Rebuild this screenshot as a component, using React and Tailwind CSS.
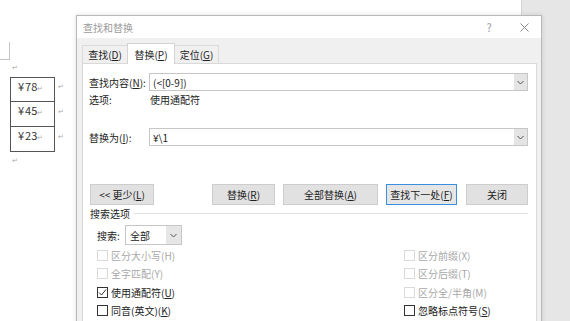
import React from 'react';

const Key = ({ children }) => <span className="underline underline-offset-[1px]">{children}</span>;

const Chevron = () => (
  <svg width="7" height="5" viewBox="0 0 7 5" fill="none">
    <path d="M0.5 1 L3.5 4 L6.5 1" stroke="#555" strokeWidth="1" />
  </svg>
);

const Combo = ({ children }) => (
  <div className="flex-1 h-[18px] flex border border-[#c6c6c6] bg-white">
    <div className="flex-1 flex items-center pl-[3px] text-[10px] text-[#222]">{children}</div>
    <div className="w-[13px] bg-[#e4e4e4] flex items-center justify-center">
      <Chevron />
    </div>
  </div>
);

const Btn = ({ children, primary, className }) => (
  <div
    className={`h-[21px] flex items-center justify-center border text-[10px] text-[#222] ${
      primary ? 'border-[#3a8ee0] bg-[#e5e5e5]' : 'border-[#cdcdcd] bg-[#e1e1e1]'
    } ${className}`}
  >
    {children}
  </div>
);

const Check = ({ label, checked, disabled }) => (
  <div className="h-[18.5px] flex items-center">
    <div
      className={`w-[11px] h-[11px] border bg-white flex items-center justify-center ${
        disabled ? 'border-[#dadada]' : 'border-[#333]'
      }`}
    >
      {checked && (
        <svg width="9" height="9" viewBox="0 0 9 9" fill="none">
          <path d="M1 4.5 L3.5 7 L8 1.5" stroke="#333" strokeWidth="1" />
        </svg>
      )}
    </div>
    <span className={`ml-[3px] text-[10px] ${disabled ? 'text-[#a8a8a8]' : 'text-[#222]'}`}>{label}</span>
  </div>
);

const prices = ['78', '45', '23'];

const App = () => {
  return (
    <div className="relative w-[570px] h-[321px] overflow-hidden bg-white flex font-['Noto_Sans_CJK_SC',sans-serif]">
      {/* document page */}
      <div className="w-[521px] h-full bg-white">
        <div className="w-[10px] h-[18px] mt-[42px] border-r border-b border-[#c4c4c4]" />
        <div className="pl-[10px]">
          <div className="h-[17px] pl-[2px] text-[7px] leading-[14px] text-[#aaa]">↵</div>
          {prices.map((v, i) => (
            <div key={v} className="flex items-start">
              <div
                className={`w-[45px] h-[25px] border-x border-b border-[#555] pl-[7px] pt-[1px] text-[11px] leading-[15px] text-[#333] ${
                  i === 0 ? 'border-t' : ''
                }`}
              >
                ¥<span className="ml-[1px]">{v}</span>
                <span className="text-[7px] text-[#aaa]">↵</span>
              </div>
              <span className="ml-[3px] mt-[4px] text-[7px] text-[#aaa]">↵</span>
            </div>
          ))}
          <div className="pl-[2px] pt-[3px] text-[7px] text-[#aaa]">↵</div>
        </div>
      </div>
      <div className="flex-1 h-full bg-[#e6e6e6] border-l border-[#d4d4d4]" />

      {/* find & replace window */}
      <div className="absolute left-[76px] top-[15px] w-[466px] h-[320px] border border-[#b8b8b8] bg-[#f0f0f0] shadow-[0_0_5px_rgba(0,0,0,0.12)] flex flex-col">
        <div className="h-[22px] bg-white flex items-center pl-[6px] text-[10px] text-[#9a9a9a]">
          <span className="flex-1">查找和替换</span>
          <span className="w-[36px] text-center text-[11px]">?</span>
          <span className="w-[34px] flex justify-center">
            <svg width="9" height="9" viewBox="0 0 9 9">
              <path d="M0.5 0.5 L8.5 8.5 M8.5 0.5 L0.5 8.5" stroke="#8a8a8a" strokeWidth="1" />
            </svg>
          </span>
        </div>

        <div className="flex-1 flex flex-col pl-[5px] pr-[4px]">
          <div className="h-[25px] flex items-end text-[10px] text-[#222]">
            <div className="w-[45px] h-[18px] flex items-center justify-center border-t border-l border-[#dadada]">
              查找(<Key>D</Key>)
            </div>
            <div className="relative z-10 -mb-px w-[48px] h-[21px] flex items-center justify-center bg-white border-t border-x border-[#d4d4d4]">
              替换(<Key>P</Key>)
            </div>
            <div className="w-[44px] h-[18px] flex items-center justify-center border-t border-r border-[#dadada]">
              定位(<Key>G</Key>)
            </div>
          </div>

          <div className="flex-1 bg-white border border-[#d9d9d9] pl-[6px] pr-[8px] pt-[9px] text-[10px] text-[#222]">
            <div className="flex items-center">
              <span className="w-[60px]">
                查找内容(<Key>N</Key>):
              </span>
              <Combo>(&lt;[0-9])</Combo>
            </div>
            <div className="h-[17px] flex items-center">
              <span className="w-[61px]">选项:</span>
              <span>使用通配符</span>
            </div>
            <div className="mt-[20px] flex items-center">
              <span className="w-[60px]">
                替换为(<Key>I</Key>):
              </span>
              <Combo>¥\1</Combo>
            </div>

            <div className="mt-[38px] flex">
              <Btn className="ml-[1px] w-[64px]">
                &lt;&lt; 更少(<Key>L</Key>)
              </Btn>
              <Btn className="ml-[58px] w-[63px]">
                替换(<Key>R</Key>)
              </Btn>
              <Btn className="ml-[8px] w-[95px]">
                全部替换(<Key>A</Key>)
              </Btn>
              <Btn primary className="ml-[8px] w-[71px]">
                查找下一处(<Key>F</Key>)
              </Btn>
              <Btn className="ml-[9px] w-[62px]">关闭</Btn>
            </div>

            <div className="h-[16px] flex items-center pl-[1px]">
              <span>搜索选项</span>
              <div className="flex-1 ml-[4px] h-px bg-[#e0e0e0]" />
            </div>

            <div className="mt-[4px] pl-[8px] flex items-center">
              <span className="w-[28px]">搜索:</span>
              <div className="w-[57px] h-[20px] flex border border-[#c6c6c6] bg-white">
                <span className="flex-1 flex items-center pl-[4px]">全部</span>
                <div className="w-[15px] bg-[#e6e6e6] flex items-center justify-center">
                  <Chevron />
                </div>
              </div>
            </div>

            <div className="mt-[1px] pl-[8px] grid grid-cols-[307px_1fr]">
              <Check label="区分大小写(H)" disabled />
              <Check label="区分前缀(X)" disabled />
              <Check label="全字匹配(Y)" disabled />
              <Check label="区分后缀(T)" disabled />
              <Check
                label={
                  <>
                    使用通配符(<Key>U</Key>)
                  </>
                }
                checked
              />
              <Check label="区分全/半角(M)" disabled />
              <Check
                label={
                  <>
                    同音(英文)(<Key>K</Key>)
                  </>
                }
              />
              <Check
                label={
                  <>
                    忽略标点符号(<Key>S</Key>)
                  </>
                }
              />
            </div>
          </div>
        </div>
      </div>
    </div>
  );
};

export default App;
